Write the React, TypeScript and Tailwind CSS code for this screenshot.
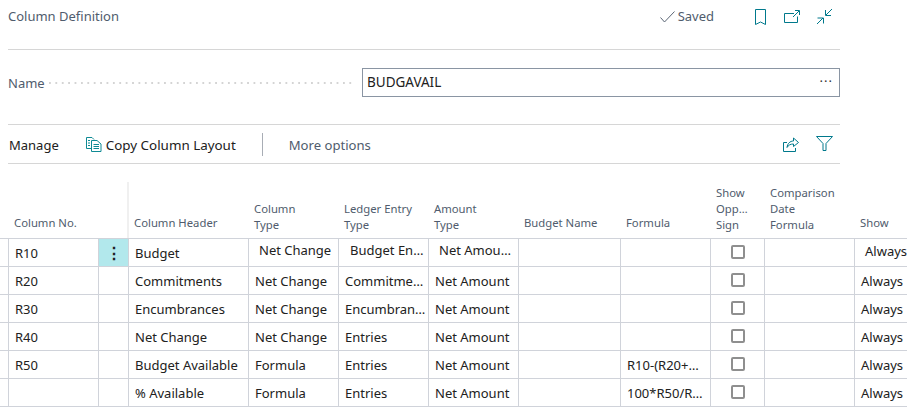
const teal = "#00798c";

const cols = [
  "w-[9px]", "w-[90px]", "w-[30px]", "w-[120px]", "w-[90px]", "w-[90px]", "w-[90px]", "w-[102px]", "w-[90px]", "w-[54px]", "w-[90px]", "w-[52px]",
];

type Row = { no: string; head: string; type: string; ledger: string; amount: string; formula: string };
const rows: Row[] = [
  { no: "R10", head: "Budget", type: "Net Change", ledger: "Budget En…", amount: "Net Amou…", formula: "" },
  { no: "R20", head: "Commitments", type: "Net Change", ledger: "Commitme…", amount: "Net Amount", formula: "" },
  { no: "R30", head: "Encumbrances", type: "Net Change", ledger: "Encumbran…", amount: "Net Amount", formula: "" },
  { no: "R40", head: "Net Change", type: "Net Change", ledger: "Entries", amount: "Net Amount", formula: "" },
  { no: "R50", head: "Budget Available", type: "Formula", ledger: "Entries", amount: "Net Amount", formula: "R10-(R20+…" },
  { no: "", head: "% Available", type: "Formula", ledger: "Entries", amount: "Net Amount", formula: "100*R50/R…" },
];

function Check() {
  return (
    <svg width="15" height="12" viewBox="0 0 15 12" fill="none" stroke="#5b6675" strokeWidth="1">
      <path d="M0.5 6.5 L4.5 11 L14.5 0.5" />
    </svg>
  );
}
function Bookmark() {
  return (
    <svg width="11" height="16" viewBox="0 0 11 16" fill="none" stroke={teal} strokeWidth="1">
      <path d="M0.5 15.5 V0.5 H10.5 V15.5 L5.5 13 Z" />
    </svg>
  );
}
function OpenNew() {
  return (
    <svg width="16" height="14" viewBox="0 0 16 14" fill="none" stroke={teal} strokeWidth="1">
      <path d="M10 3.5 H0.5 V12.5 H13.5 V6.5" />
      <path d="M9 7 L15 1 M11 0.5 H15.5 V5" />
    </svg>
  );
}
function Collapse() {
  return (
    <svg width="17" height="17" viewBox="0 0 17 17" fill="none" stroke={teal} strokeWidth="1">
      <path d="M16 1 L10 7 M9.5 2 V7.5 H15" />
      <path d="M1 16 L7 10 M1.5 10 H7.5 V15.5" />
    </svg>
  );
}
function CopyIcon() {
  return (
    <svg width="16" height="15" viewBox="0 0 16 15" fill="none" stroke="#0f8a94" strokeWidth="1">
      <path d="M5 11.5 H0.5 V0.5 H6 L8 2.5" />
      <path d="M5.5 3.5 H11 L15 7 V14.5 H5.5 Z" />
      <path d="M2 3.5 H4 M2 6 H4 M2 8.5 H4 M7.5 7.5 H13 M7.5 9.5 H13 M7.5 11.5 H13" />
    </svg>
  );
}
function Share() {
  return (
    <svg width="17" height="15" viewBox="0 0 17 15" fill="none" stroke={teal} strokeWidth="1">
      <path d="M4 5.5 H0.5 V14.5 H12.5 V11" />
      <path d="M10.5 1 L15.5 5.5 L10.5 9.5 V7 C7.5 7 5.5 8 4 10.5 C4.5 6.5 7 4 10.5 4 Z" />
    </svg>
  );
}
function Filter() {
  return (
    <svg width="17" height="15" viewBox="0 0 17 15" fill="none" stroke={teal} strokeWidth="1">
      <path d="M0.5 0.5 H16.5 L10 7.5 V14.5 H7 V7.5 Z" />
    </svg>
  );
}

function HeaderCell({ w, lines }: { w: string; lines: string[] }) {
  return (
    <div className={`${w} shrink-0 flex flex-col justify-end pl-[5px] ${lines.length === 1 ? "pb-[7px]" : "pb-[5px]"} text-[11.3px] leading-[16px] text-[#505c6d]`}>
      {lines.map((l) => (
        <span key={l} className="whitespace-nowrap">{l}</span>
      ))}
    </div>
  );
}

function Cell({ w, children, className = "" }: { w: string; children?: React.ReactNode; className?: string }) {
  return (
    <div className={`${w} shrink-0 h-full border-r border-[#d0d3da] flex items-center pl-[6px] pt-[3px] whitespace-nowrap overflow-hidden ${className}`}>
      {children}
    </div>
  );
}

function Box() {
  return <span className="block w-[14px] h-[14px] border-2 border-[#8f8f8f] rounded-[2px] bg-white" />;
}

export default function App() {
  return (
    <div className="w-[907px] h-[408px] overflow-hidden bg-white text-[13px] text-[#212121]" style={{ fontFamily: '"Noto Sans", "Open Sans", sans-serif' }}>
      <div className="w-[832px] ml-[8px]">
        <div className="h-[50px] border-b border-[#d6d6d6] flex items-start">
          <span className="mt-[6px] text-[13px] leading-[20px] text-[#505c6d]">Column Definition</span>
          <div className="ml-auto flex items-center mr-[7px] mt-[7px]">
            <span className="flex items-center gap-[3px] text-[#505c6d] mr-[41px]"><Check />Saved</span>
            <span className="mr-[18px]"><Bookmark /></span>
            <span className="mr-[16px]"><OpenNew /></span>
            <Collapse />
          </div>
        </div>
        <div className="h-[75px] pb-[9px] border-b border-[#d6d6d6] flex items-center">
          <span className="text-[#505c6d] leading-[20px]">Name</span>
          <span className="ml-[4px] mr-[8px] flex-1 h-[2px] bg-[linear-gradient(to_right,#d4d4d4_2px,transparent_2px)] bg-[length:6.4px_2px]" />
          <div className="w-[478px] h-[29px] border border-[#8a95a3] flex items-center justify-between pl-[4px] pr-[6px]">
            <span className="text-[13.5px]">BUDGAVAIL</span>
            <span className="tracking-[1px] leading-[10px] mb-[4px] text-[#333]">···</span>
          </div>
        </div>
        <div className="h-[39px] border-b border-[#d6d6d6] flex items-center">
          <span className="ml-[1px] mr-[27px] pt-[3px]">Manage</span>
          <CopyIcon />
          <span className="ml-[4px] pt-[3px] text-[13.4px]">Copy Column Layout</span>
          <span className="w-px h-[23px] bg-[#a8adb5] ml-[26px] mr-[26px]" />
          <span className="text-[#505c6d] pt-[3px] text-[13.1px]">More options</span>
          <span className="ml-auto mr-[16px]"><Share /></span>
          <span className="mr-[7px] mb-[1px]"><Filter /></span>
        </div>
      </div>
      <div className="h-[75px] flex border-b border-[#d0d3da]">
        <div className={`${cols[0]} shrink-0`} />
        <HeaderCell w={cols[1]} lines={["Column No."]} />
        <div className={`${cols[2]} shrink-0 border-r-2 border-[#f0f0f0] mt-[18px]`} />
        <HeaderCell w={cols[3]} lines={["Column Header"]} />
        <HeaderCell w={cols[4]} lines={["Column", "Type"]} />
        <HeaderCell w={cols[5]} lines={["Ledger Entry", "Type"]} />
        <HeaderCell w={cols[6]} lines={["Amount", "Type"]} />
        <HeaderCell w={cols[7]} lines={["Budget Name"]} />
        <HeaderCell w={cols[8]} lines={["Formula"]} />
        <HeaderCell w={cols[9]} lines={["Show", "Opp…", "Sign"]} />
        <HeaderCell w={cols[10]} lines={["Comparison", "Date", "Formula"]} />
        <HeaderCell w={cols[11]} lines={["Show"]} />
      </div>
      {rows.map((r, i) => (
        <div key={i} className="h-[28px] flex items-center border-b border-[#d0d3da]">
          <Cell w={cols[0]} className="!pl-0" />
          <Cell w={cols[1]}>{r.no}</Cell>
          <Cell w={cols[2]} className={i === 0 ? "!pl-0 !pt-0 justify-center bg-[#b2e8ec] text-[16px] font-bold" : ""}>{i === 0 ? "⋮" : ""}</Cell>
          <Cell w={cols[3]}>{r.head}</Cell>
          <Cell w={cols[4]}><span className={i === 0 ? "ml-[4px] mb-[6px]" : ""}>{r.type}</span></Cell>
          <Cell w={cols[5]}><span className={i === 0 ? "ml-[5px] mb-[6px]" : ""}>{r.ledger}</span></Cell>
          <Cell w={cols[6]}><span className={i === 0 ? "ml-[4px] mb-[6px]" : ""}>{r.amount}</span></Cell>
          <Cell w={cols[7]} />
          <Cell w={cols[8]}>{r.formula}</Cell>
          <Cell w={cols[9]} className="!pl-0 !pt-0 justify-center"><span className="-mt-[2px]"><Box /></span></Cell>
          <Cell w={cols[10]} />
          <div className={`${cols[11]} shrink-0 pl-[6px] pt-[2px] whitespace-nowrap`}><span className={i === 0 ? "ml-[4px] block -mt-[4px]" : ""}>Always</span></div>
        </div>
      ))}
    </div>
  );
}
